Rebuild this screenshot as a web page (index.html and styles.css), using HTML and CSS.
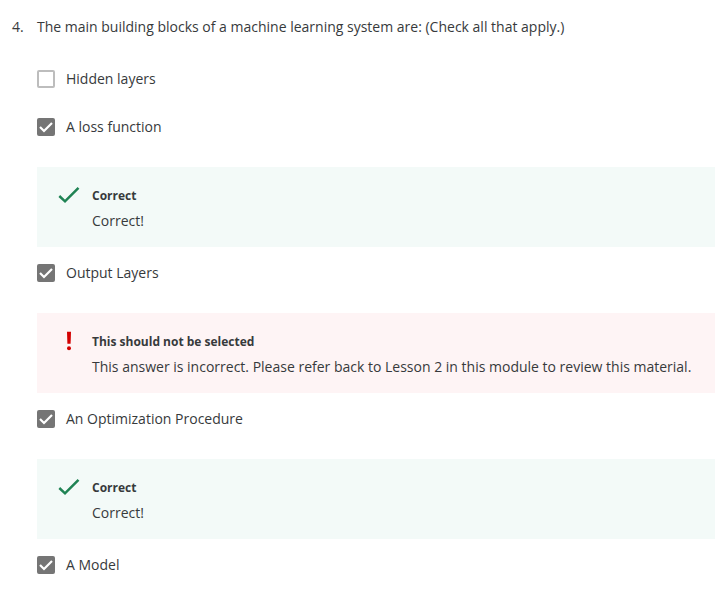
FILE: index.html
```html
<!DOCTYPE html>
<html lang="en">
<head>
<meta charset="utf-8">
<title>Quiz</title>
<link rel="stylesheet" href="styles.css">
</head>
<body>
<main class="question">
  <span class="number">4.</span>
  <fieldset class="body">
    <legend class="prompt">The main building blocks of a machine learning system are: (Check all that apply.)</legend>
    <label class="option"><input class="box" type="checkbox">Hidden layers</label>
    <label class="option"><input class="box" type="checkbox" checked>A loss function</label>
    <section class="feedback correct">
      <svg class="icon" viewBox="0 0 24 24" aria-hidden="true"><path d="M2.300 13 8 18.300 21.500 4.800" fill="none" stroke="#1f8354" stroke-width="2.500"/></svg>
      <div><h2 class="verdict">Correct</h2><p class="detail">Correct!</p></div>
    </section>
    <label class="option"><input class="box" type="checkbox" checked>Output Layers</label>
    <section class="feedback wrong">
      <svg class="icon" viewBox="0 0 24 24" aria-hidden="true"><path d="M10 2.700h4l-.4 12h-3.200z" fill="#d30001"/><circle cx="12" cy="19.200" r="2" fill="#d30001"/></svg>
      <div><h2 class="verdict">This should not be selected</h2><p class="detail">This answer is incorrect. Please refer back to Lesson 2 in this module to review this material.</p></div>
    </section>
    <label class="option"><input class="box" type="checkbox" checked>An Optimization Procedure</label>
    <section class="feedback correct">
      <svg class="icon" viewBox="0 0 24 24" aria-hidden="true"><path d="M2.300 13 8 18.300 21.500 4.800" fill="none" stroke="#1f8354" stroke-width="2.500"/></svg>
      <div><h2 class="verdict">Correct</h2><p class="detail">Correct!</p></div>
    </section>
    <label class="option"><input class="box" type="checkbox" checked>A Model</label>
  </fieldset>
</main>
</body>
</html>
```
FILE: styles.css
```css
* { box-sizing: border-box; }
body { margin: 0; background: #fff; color: #373a3c; font: 14px/24px "Open Sans", sans-serif; }
.question { display: flex; padding: 15px 0 16px 12px; }
.number { flex: 0 0 25px; }
.body { flex: 1; min-width: 0; margin: 0; padding: 0; border: 0; }
.prompt { padding: 0; margin-bottom: 28px; }
.option { display: flex; align-items: center; gap: 11px; }
.option + .option { margin-top: 24px; }
.box { appearance: none; flex: none; width: 18px; height: 18px; margin: 0; border: 2px solid #bdbdbd; border-radius: 2px; background: #fff; }
.box:checked { border-color: #757575; background: #757575 url("data:image/svg+xml,%3Csvg xmlns='http://www.w3.org/2000/svg' viewBox='0 0 14 14'%3E%3Cpath d='M1 7l4 4 8-8' fill='none' stroke='white' stroke-width='2.2'/%3E%3C/svg%3E") center / 14px no-repeat; }
.feedback { display: flex; gap: 11px; margin: 28px 0 14px; padding: 16px 20px 14px; }
.correct { background: #f3faf8; }
.wrong { background: #fef4f5; }
.icon { flex: none; width: 24px; height: 24px; }
.verdict { margin: 0; font-size: 12px; line-height: 26px; font-weight: 700; }
.detail { margin: 0; }
```
